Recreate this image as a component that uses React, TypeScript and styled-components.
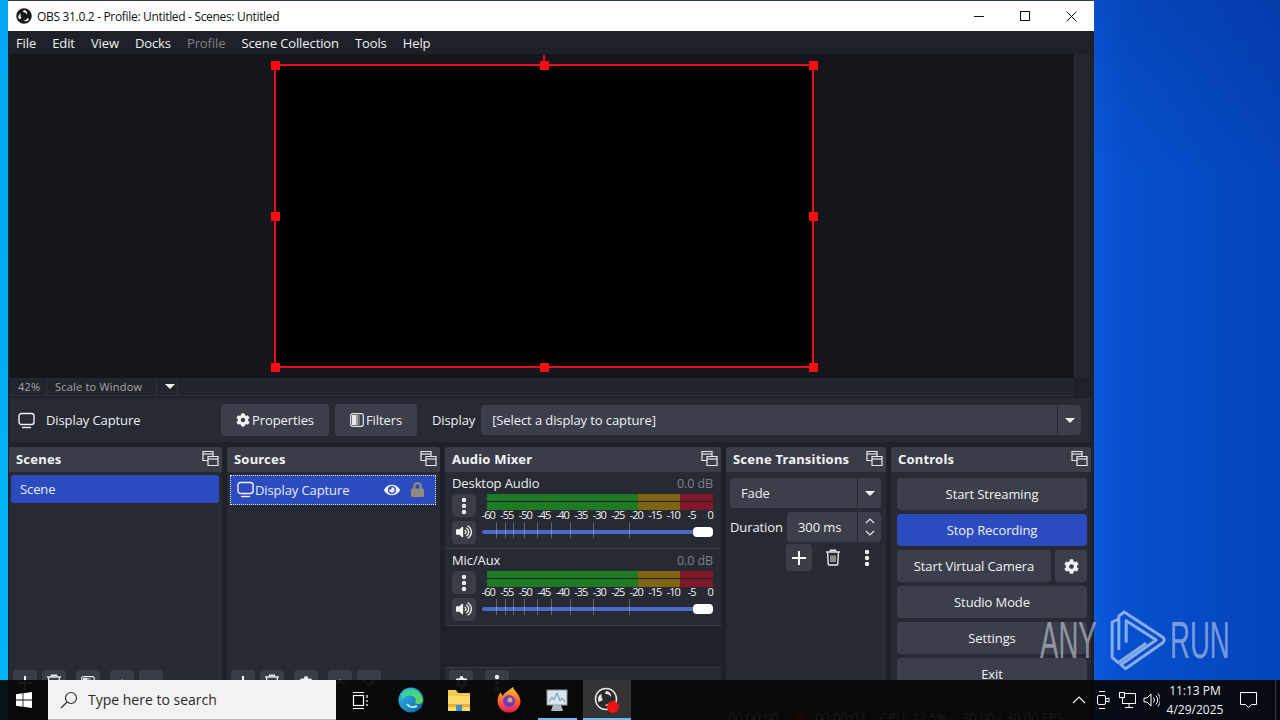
import React from "react";
import styled, { createGlobalStyle } from "styled-components";
import { FaCog, FaEye, FaVolumeUp, FaLock } from "react-icons/fa";

const Global = createGlobalStyle`
  html, body { margin: 0; padding: 0; width: 1280px; height: 720px; overflow: hidden; background: #0a45b8; }
  #root { width: 1280px; height: 720px; overflow: hidden; }
  * { box-sizing: border-box; }
`;

const Desktop = styled.div`
  position: relative; width: 1280px; height: 720px; overflow: hidden;
  display: flex; align-items: flex-start;
  font-family: "Open Sans", "Noto Sans", sans-serif; font-size: 13px; color: #fff; letter-spacing: -0.1px;
  background:
    linear-gradient(180deg, rgba(0,0,50,.12), rgba(0,0,50,0) 180px),
    linear-gradient(90deg, #0a58dc 1095px, #0650cd 1125px, #0444bb 1280px);
`;
const LeftStrip = styled.div`
  width: 8px; height: 720px; flex: none;
  background: linear-gradient(180deg, #04a6f2, #02b4f8);
`;
const Window = styled.div`
  width: 1086px; height: 760px; flex: none; background: #1f2128;
  display: flex; flex-direction: column; border-top: 1px solid #2b3a4e;
`;
const TitleBar = styled.div`
  height: 30px; background: #fff; color: #111; display: flex; align-items: center;
  padding-left: 8px; font-size: 12px; flex: none;
`;
const TitleText = styled.span` margin-left: 5px; letter-spacing: -0.32px; `;
const WindowControls = styled.div` margin-left: auto; display: flex; `;
const WindowButton = styled.div`
  width: 46px; height: 30px; display: flex; align-items: center; justify-content: center;
`;
const MenuBar = styled.div`
  height: 23px; display: flex; align-items: center; padding-left: 8px; flex: none; gap: 16px;
  font-size: 13px; color: #eef0f2;
`;
const MenuItem = styled.span<{ $off?: boolean }>`
  color: ${p => (p.$off ? "#7e8085" : "#eef0f2")};
`;
const PreviewRow = styled.div` height: 324px; display: flex; flex: none; padding-left: 2px; `;
const Preview = styled.div`
  width: 1064px; height: 324px; background: #14161c; display: flex; padding-left: 4px;
  align-items: center; justify-content: center; flex: none;
`;
const Canvas = styled.div`
  position: relative; width: 538px; height: 302px; background: #000;
  box-shadow: 0 0 0 1px #e81018, inset 0 0 0 1px #e81018;
`;
const Handle = styled.i<{ $x: string; $y: string }>`
  position: absolute; width: 9px; height: 9px; background: #ff0a10;
  left: ${p => p.$x}; top: ${p => p.$y}; margin: -4.5px 0 0 -4.5px;
`;
const RotateTick = styled.i`
  position: absolute; left: 50%; top: -10px; width: 2px; height: 9px; margin-left: -1px; background: #e81018;
`;
const VScroll = styled.div`
  width: 16px; height: 324px; background: #23262d; border-left: 1px solid #2c2f37; flex: none;
`;
const ScaleBar = styled.div`
  height: 18px; margin: 0 20px 0 2px; display: flex; align-items: center; background: #23252c;
  font-size: 11px; color: #a4a6aa; border-bottom: 1px solid #2c2f37; flex: none; letter-spacing: 0.2px;
`;
const ScaleCell = styled.span<{ $w: number }>`
  width: ${p => p.$w}px; height: 17px; padding-left: 8px; display: flex; align-items: center;
  border-right: 1px solid #30333b;
`;
const ContextBar = styled.div`
  height: 44px; margin: 2px 0 0 2px; padding: 0 10px 0 8px; background: #272a33; display: flex; align-items: center;
  flex: none; width: 1081px;
`;
const ContextLabel = styled.span` margin-left: 11px; width: 175px; color: #eef0f2; `;
const Button = styled.div`
  height: 32px; background: #3c3f4b; border-radius: 4px; display: flex; align-items: center;
  justify-content: center; color: #f0f1f3; font-size: 13px; gap: 2px;
`;
const ToolButton = styled(Button)<{ $w: number }>` width: ${p => p.$w}px; margin-right: 6px; `;
const DisplayLabel = styled.span` margin: 0 6px 0 9px; color: #eef0f2; `;
const Combo = styled.div`
  flex: 1; height: 30px; background: #3c3f4b; border-radius: 4px; display: flex; align-items: center;
  padding-left: 11px; color: #eef0f2; position: relative;
`;
const ComboArrow = styled.span`
  margin-left: auto; width: 24px; height: 30px; border-left: 1px solid #23252c;
  display: flex; align-items: center; justify-content: center;
`;
const Caret = styled.i`
  width: 0; height: 0; border-left: 5px solid transparent; border-right: 5px solid transparent; border-top: 5px solid #f0f0f0;
`;
const Docks = styled.div`
  margin: 5px 0 0 1px; display: flex; gap: 5px; height: 257px; flex: none;
`;
const Dock = styled.section<{ $w: number }>`
  width: ${p => p.$w}px; background: #272a33; display: flex; flex-direction: column; border-radius: 3px 3px 0 0;
`;
const DockHeader = styled.header`
  height: 25px; background: #3a3d47; display: flex; align-items: center; justify-content: space-between;
  padding: 0 3px 2px 7px; font-weight: 700; font-size: 13px; color: #f4f4f6; flex: none; letter-spacing: 0.2px;
  border-radius: 3px 3px 0 0; font-family: "Noto Sans", sans-serif;
`;
const DockBody = styled.div` flex: 1; display: flex; flex-direction: column; min-height: 0; `;
const SceneList = styled.div` flex: 1; padding: 3px 3px 0 2px; `;
const SourceList = styled.div` flex: 1; padding: 3px 4px 0 3px; `;
const SceneRow = styled.div`
  height: 28px; background: #2b4bbf; border-radius: 3px; padding: 0 0 1px 9px; display: flex; align-items: center; color: #e8ebf5;
`;
const SourceRow = styled.div`
  height: 30px; background: #2b4bbf; border: 1px dotted #dfe6ff; display: flex; align-items: center; color: #e8ebf5;
  padding: 0 10px 1px 6px;
`;
const SourceName = styled.span` margin-left: 1px; flex: 1; `;
const SourceIcons = styled.div` display: flex; align-items: center; gap: 10px; `;
const DockToolbar = styled.div`
  height: 32px; display: flex; align-items: flex-start; padding: 0 4px; gap: 5px; flex: none; margin-bottom: 2px;
`;
const SmallButton = styled.div<{ $w?: number; $sep?: boolean }>`
  width: ${p => p.$w ?? 24}px; height: 25px; background: #3a3d47; border-radius: 4px; flex: none;
  margin-left: ${p => (p.$sep ? "5px" : "0")};
  display: flex; align-items: center; justify-content: center; color: #f0f0f0;
`;
const Channel = styled.div`
  height: 77px; padding: 2px 7px 0; border-bottom: 1px solid #3a3d47; flex: none; display: flex; flex-direction: column;
`;
const ChannelHead = styled.div` display: flex; justify-content: space-between; height: 18px; align-items: center; color: #eef0f2; `;
const Db = styled.span` color: #7f828a; font-size: 12.5px; margin-right: 1px; `;
const MeterRow = styled.div` display: flex; height: 25px; margin-top: 2px; gap: 11px; `;
const MeterCol = styled.div` flex: 1; display: flex; flex-direction: column; position: relative; `;
const MeterBar = styled.div`
  display: grid; grid-template-columns: 151px 42px 33px; height: 16px; margin: 0;
`;
const MeterCell = styled.i<{ $c: string }>`
  display: block; height: 16px; background: linear-gradient(${p => p.$c} 0 7px, #13251a 7px 8px, ${p => p.$c} 8px 100%);
`;
const Scale = styled.div`
  position: absolute; top: 14px; left: -8px; display: grid; grid-template-columns: repeat(13, 18.5px);
  font-size: 11px; line-height: 14px; letter-spacing: -1px; color: #f3f3f3; text-align: center; white-space: nowrap;
`;
const SquareButton = styled.div`
  width: 24px; height: 23px; background: #3a3d47; border-radius: 4px; flex: none;
  display: flex; align-items: center; justify-content: center; color: #f4f4f4;
`;
const SliderRow = styled.div` display: flex; margin-top: 1px; height: 24px; align-items: center; gap: 6px; `;
const SliderTrack = styled.div`
  position: relative; flex: 1; height: 4px; background: #4a69c9; border-radius: 2px; margin-right: 1px;
`;
const SliderTick = styled.i<{ $x: number }>`
  position: absolute; left: ${p => p.$x}px; top: -8px; width: 1px; height: 16px; background: rgba(255,255,255,.28);
`;
const Thumb = styled.i`
  position: absolute; right: 0; top: -3px; width: 20px; height: 10px; background: #fff; border-radius: 4px;
`;
const MixerSpace = styled.div` flex: 1; background: #1f2128; `;
const MixerToolbar = styled(DockToolbar)` border-top: 1px solid #3a3d47; padding: 2px 4px 0; height: 37px; margin: 0; gap: 12px; `;
const TransBody = styled.div` padding: 6px 5px 0 4px; display: flex; flex-direction: column; flex: 1; `;
const TransCombo = styled(Combo)` flex: none; height: 30px; width: 151px; `;
const DurationRow = styled.div` display: flex; align-items: center; margin-top: 4px; height: 30px; color: #eef0f2; `;
const DurationLabel = styled.span` width: 57px; `;
const SpinBox = styled.div`
  width: 94px; height: 30px; background: #3c3f4b; border-radius: 4px; display: flex; align-items: center; padding-left: 11px;
`;
const SpinArrows = styled.div`
  margin-left: auto; width: 24px; height: 30px; border-left: 1px solid #23252c; display: flex; flex-direction: column;
  align-items: center; justify-content: space-around; padding: 3px 0;
`;
const TransTools = styled.div` display: flex; align-items: center; margin: 2px 0 0 55px; height: 27px; `;
const ToolIcon = styled.div<{ $w: number }>` width: ${p => p.$w}px; display: flex; justify-content: center; `;
const PlusButton = styled(SmallButton)` width: 26px; height: 27px; margin-left: 1px; `;
const ControlsBody = styled.div` padding: 6px 4px 0 6px; display: flex; flex-direction: column; gap: 4px; `;
const ControlButton = styled(Button)<{ $active?: boolean; $grow?: boolean }>`
  ${p => (p.$grow ? "flex: 1;" : "")}
  background: ${p => (p.$active ? "#2b4bbf" : "#3c3f4b")};
`;
const ControlPair = styled.div` display: flex; gap: 4px; `;
const GearButton = styled(Button)` width: 32px; flex: none; `;
const StatusBar = styled.div`
  height: 20px; margin-top: 3px; display: flex; align-items: center; font-size: 13px; color: #eef0f2; padding-left: 720px; flex: none;
`;
const StatusItem = styled.span<{ $w: number }>` width: ${p => p.$w}px; flex: none; white-space: nowrap; `;
const RecDot = styled.i`
  width: 12px; height: 12px; border-radius: 50%; background: #e01010; margin: 0 8px 0 -20px; flex: none;
`;
const Taskbar = styled.div`
  position: absolute; left: 0; right: 0; bottom: 0; height: 40px; background: rgba(6,6,6,.93);
  display: flex; align-items: center; color: #fff;
`;
const StartButton = styled.div` width: 48px; height: 40px; display: flex; align-items: center; justify-content: center; `;
const SearchBox = styled.div`
  width: 288px; height: 40px; background: #f2f2f2; border-bottom: 1px solid #b8b8b8; display: flex; align-items: center; padding-left: 12px;
  color: #2a2a2a; font-size: 14px; gap: 10px; letter-spacing: 0;
`;
const TaskSlot = styled.div<{ $active?: boolean; $running?: boolean; $gap?: number }>`
  width: 48px; height: 40px; display: flex; align-items: center; justify-content: center; position: relative;
  margin-left: ${p => p.$gap ?? 0}px;
  background: ${p => (p.$active ? "#333436" : "transparent")};
  ${p => p.$running ? `&::after { content: ''; position: absolute; left: ${p.$active ? 0 : 5}px; right: ${p.$active ? 0 : 4}px; bottom: 0; height: 2px; background: #76b9ed; }` : ""}
`;
const TaskGroup = styled.div` display: flex; `;
const Tray = styled.div` margin-left: auto; display: flex; align-items: center; height: 40px; padding-right: 11px; position: relative; `;
const TraySlot = styled.div` width: 24px; height: 40px; display: flex; align-items: center; justify-content: center; `;
const Clock = styled.div`
  width: 64px; text-align: center; font-size: 12px; line-height: 19px; color: #f2f2f2; white-space: nowrap; letter-spacing: 0;
`;
const ActionCenter = styled.div` width: 42px; display: flex; justify-content: center; `;
const ShowDesktop = styled.i`
  position: absolute; right: 4px; top: 0; width: 1px; height: 40px; background: #3c3c3c;
`;
const Watermark = styled.div`
  position: absolute; left: 1040px; top: 610px; height: 60px; display: flex; align-items: center;
  color: rgba(222,226,240,.55); font-family: "Liberation Sans", sans-serif; font-size: 52px; line-height: 60px; letter-spacing: 0;
`;
const WatermarkText = styled.span` display: inline-block; transform: scaleX(.53); transform-origin: left center; `;
const WatermarkAny = styled(WatermarkText)` margin-right: -38px; `;
const WatermarkRun = styled(WatermarkText)` margin-left: 4px; `;

const FloatIcon = () => (
  <svg width="17" height="17" viewBox="0 0 17 17" fill="none" stroke="#e8e8ea" strokeWidth="1.2">
    <path d="M1 1.5h10v9H1z" fill="#3a3d47" /><path d="M1 4h10" />
    <path d="M6 6.5h10v9H6z" fill="#3a3d47" /><path d="M6 9h10" />
  </svg>
);
const Monitor = ({ size = 17 }: { size?: number }) => (
  <svg width={size} height={size} viewBox="0 0 17 17" fill="none" stroke="#f2f2f4" strokeWidth="1.4">
    <rect x="1" y="1.5" width="15" height="11" rx="2.5" /><path d="M4 15.5h9" />
  </svg>
);
const FilterIcon = () => (
  <svg width="14" height="14" viewBox="0 0 14 14">
    <rect x=".7" y=".7" width="12.6" height="12.6" rx="2" fill="#3c3f4b" stroke="#e6e6e8" strokeWidth="1.2" />
    <rect x="2" y="2" width="4" height="10" fill="#e6e6e8" /><rect x="6" y="2" width="2" height="10" fill="#a0a0a6" /><rect x="8" y="2" width="2" height="10" fill="#70727a" />
  </svg>
);
const Dots = () => (
  <svg width="6" height="18" viewBox="0 0 6 18" fill="#eeeeee"><circle cx="3" cy="3" r="2.2" /><circle cx="3" cy="9" r="2.2" /><circle cx="3" cy="15" r="2.2" /></svg>
);
const Plus = () => (
  <svg width="16" height="16" viewBox="0 0 16 16" stroke="#fff" strokeWidth="2"><path d="M8 1v14M1 8h14" /></svg>
);
const Trash = () => (
  <svg width="16" height="17" viewBox="0 0 16 17" fill="none" stroke="#e8e8ea" strokeWidth="1.4">
    <path d="M1 3h14M5.5 3V1.2h5V3" /><path d="M2.6 3.5l.6 11.5a1 1 0 0 0 1 1h7.6a1 1 0 0 0 1-1l.6-11.5" />
    <path d="M6 6.5v6.5M8 6.5v6.5M10 6.5v6.5" strokeWidth="1" />
  </svg>
);
const Chev = ({ up, big }: { up?: boolean; big?: boolean }) => (
  <svg width={big ? 14 : 10} height={big ? 8 : 6} viewBox="0 0 10 6" fill="none" stroke="#e8e8ea" strokeWidth="1.2"><path d={up ? "M1 5l4-4 4 4" : "M1 1l4 4 4-4"} /></svg>
);
const ObsLogo = ({ size = 16 }: { size?: number }) => (
  <svg width={size} height={size} viewBox="0 0 32 32">
    <circle cx="16" cy="16" r="15.5" fill="#1a1a1c" />
    <path d="M16 4a7 7 0 0 1 6 9 8 8 0 0 0-8-5 6 6 0 0 1 2-4zM26 22a7 7 0 0 1-11 3 8 8 0 0 0 8-5 6 6 0 0 1 3 2zM6 22a7 7 0 0 1 4-11 8 8 0 0 0 1 9 6 6 0 0 1-5 2z" fill="#fff" />
  </svg>
);
const ObsLogoOutline = () => (
  <svg width="26" height="26" viewBox="0 0 26 26">
    <circle cx="12" cy="12" r="10.5" fill="#2a2a2c" stroke="#e6e6e6" strokeWidth="1.5" />
    <path d="M12 4a5 5 0 0 1 5 6 6 6 0 0 0-6-3zM19 16a5 5 0 0 1-8 2 6 6 0 0 0 5-3zM5 15a5 5 0 0 1 3-8 6 6 0 0 0 1 6z" fill="#e6e6e6" />
    <circle cx="19" cy="20" r="6" fill="#f01010" />
  </svg>
);
const Ticks = [14, 23, 31, 42, 55, 69, 88, 111, 147];
const ScaleLabels = ["-60", "-55", "-50", "-45", "-40", "-35", "-30", "-25", "-20", "-15", "-10", "-5", "0"];

const MixerChannel = ({ name }: { name: string }) => (
  <Channel>
    <ChannelHead><span>{name}</span><Db>0.0 dB</Db></ChannelHead>
    <MeterRow>
      <SquareButton><Dots /></SquareButton>
      <MeterCol>
        <MeterBar>
          <MeterCell $c="#1f7a24" /><MeterCell $c="#7f6512" /><MeterCell $c="#80182a" />
        </MeterBar>
        <Scale>{ScaleLabels.map(l => <span key={l}>{l}</span>)}</Scale>
      </MeterCol>
    </MeterRow>
    <SliderRow>
      <SquareButton><FaVolumeUp size={16} /></SquareButton>
      <SliderTrack>
        {Ticks.map(x => <SliderTick key={x} $x={x} />)}
        <Thumb />
      </SliderTrack>
    </SliderRow>
  </Channel>
);

const ListTools = ({ third }: { third: React.ReactNode }) => (
  <DockToolbar>
    <SmallButton><Plus /></SmallButton>
    <SmallButton><Trash /></SmallButton>
    <SmallButton $sep>{third}</SmallButton>
    <SmallButton $sep><Chev up big /></SmallButton>
    <SmallButton><Chev big /></SmallButton>
  </DockToolbar>
);

export default function App() {
  return (
    <Desktop>
      <Global />
      <LeftStrip />
      <Window>
        <TitleBar>
          <ObsLogo />
          <TitleText>OBS 31.0.2 - Profile: Untitled - Scenes: Untitled</TitleText>
          <WindowControls>
            <WindowButton><svg width="10" height="10" stroke="#111"><path d="M0 5.5h10" /></svg></WindowButton>
            <WindowButton><svg width="10" height="10" stroke="#111" fill="none"><rect x=".5" y=".5" width="9" height="9" /></svg></WindowButton>
            <WindowButton><svg width="11" height="11" stroke="#111" fill="none"><path d="M.5.5l10 10M10.5.5l-10 10" /></svg></WindowButton>
          </WindowControls>
        </TitleBar>
        <MenuBar>
          <MenuItem>File</MenuItem><MenuItem>Edit</MenuItem><MenuItem>View</MenuItem><MenuItem>Docks</MenuItem>
          <MenuItem $off>Profile</MenuItem><MenuItem>Scene Collection</MenuItem><MenuItem>Tools</MenuItem><MenuItem>Help</MenuItem>
        </MenuBar>
        <PreviewRow>
          <Preview>
            <Canvas>
              <RotateTick />
              {["0%", "50%", "100%"].flatMap(x => ["0%", "50%", "100%"].filter(y => !(x === "50%" && y === "50%")).map(y => <Handle key={x + y} $x={x} $y={y} />))}
            </Canvas>
          </Preview>
          <VScroll />
        </PreviewRow>
        <ScaleBar>
          <ScaleCell $w={37}>42%</ScaleCell>
          <ScaleCell $w={110}>Scale to Window</ScaleCell>
          <ScaleCell $w={21}><Caret /></ScaleCell>
        </ScaleBar>
        <ContextBar>
          <Monitor />
          <ContextLabel>Display Capture</ContextLabel>
          <ToolButton $w={108}><FaCog size={14} />Properties</ToolButton>
          <ToolButton $w={82}><FilterIcon />Filters</ToolButton>
          <DisplayLabel>Display</DisplayLabel>
          <Combo>[Select a display to capture]<ComboArrow><Caret /></ComboArrow></Combo>
        </ContextBar>
        <Docks>
          <Dock $w={213}>
            <DockHeader>Scenes<FloatIcon /></DockHeader>
            <DockBody>
              <SceneList><SceneRow>Scene</SceneRow></SceneList>
              <ListTools third={<FilterIcon />} />
            </DockBody>
          </Dock>
          <Dock $w={213}>
            <DockHeader>Sources<FloatIcon /></DockHeader>
            <DockBody>
              <SourceList>
                <SourceRow>
                  <Monitor /><SourceName>Display Capture</SourceName>
                  <SourceIcons><FaEye size={16} color="#f2f2f4" /><FaLock size={15} color="#8f8c7c" /></SourceIcons>
                </SourceRow>
              </SourceList>
              <ListTools third={<FaCog size={14} />} />
            </DockBody>
          </Dock>
          <Dock $w={276}>
            <DockHeader>Audio Mixer<FloatIcon /></DockHeader>
            <DockBody>
              <MixerChannel name="Desktop Audio" />
              <MixerChannel name="Mic/Aux" />
              <MixerSpace />
              <MixerToolbar>
                <SmallButton><FaCog size={13} /></SmallButton>
                <SmallButton><Dots /></SmallButton>
              </MixerToolbar>
            </DockBody>
          </Dock>
          <Dock $w={160}>
            <DockHeader>Scene Transitions<FloatIcon /></DockHeader>
            <TransBody>
              <TransCombo>Fade<ComboArrow><Caret /></ComboArrow></TransCombo>
              <DurationRow>
                <DurationLabel>Duration</DurationLabel>
                <SpinBox>300 ms<SpinArrows><Chev up /><Chev /></SpinArrows></SpinBox>
              </DurationRow>
              <TransTools>
                <PlusButton><Plus /></PlusButton>
                <ToolIcon $w={42}><Trash /></ToolIcon>
                <ToolIcon $w={26}><Dots /></ToolIcon>
              </TransTools>
            </TransBody>
          </Dock>
          <Dock $w={200}>
            <DockHeader>Controls<FloatIcon /></DockHeader>
            <ControlsBody>
              <ControlButton>Start Streaming</ControlButton>
              <ControlButton $active>Stop Recording</ControlButton>
              <ControlPair>
                <ControlButton $grow>Start Virtual Camera</ControlButton>
                <GearButton><FaCog size={15} /></GearButton>
              </ControlPair>
              <ControlButton>Studio Mode</ControlButton>
              <ControlButton>Settings</ControlButton>
              <ControlButton>Exit</ControlButton>
            </ControlsBody>
          </Dock>
        </Docks>
        <StatusBar>
          <StatusItem $w={87}>00:00:00</StatusItem>
          <RecDot />
          <StatusItem $w={65}>00:00:07</StatusItem>
          <StatusItem $w={82}>CPU: 12.5%</StatusItem>
          <StatusItem $w={110}>30.00 / 30.00 FPS</StatusItem>
        </StatusBar>
      </Window>

      <Watermark>
        <WatermarkAny>ANY</WatermarkAny>
        <svg width="57" height="60" viewBox="235 30 170 180" fill="none" stroke="rgba(170,195,240,.8)" strokeWidth="9" strokeLinejoin="round">
          <path d="M264 150 V48 L280 36 L396 112 Q404 120 396 128 L284 206 L270 194 L376 120 L286 62 V128" />
          <path d="M262 58 L244 66 V172 L262 188 L346 130" />
        </svg>
        <WatermarkRun>RUN</WatermarkRun>
      </Watermark>

      <Taskbar>
        <StartButton>
          <svg width="16" height="16" viewBox="0 0 16 16" fill="#fff"><path d="M0 2.2l6.6-.9v6.3H0zM7.4 1.2L16 0v7.6H7.4zM0 8.4h6.6v6.3L0 13.8zM7.4 8.4H16V16l-8.6-1.2z" /></svg>
        </StartButton>
        <SearchBox>
          <svg width="18" height="18" viewBox="0 0 18 18" fill="none" stroke="#333" strokeWidth="1.2"><circle cx="11" cy="7" r="5.5" /><path d="M7 11l-6 6" /></svg>
          Type here to search
        </SearchBox>
        <TaskGroup>
          <TaskSlot>
            <svg width="17" height="17" viewBox="0 0 17 17" fill="none" stroke="#fff" strokeWidth="1.2"><path d="M1 .5h11M1 16.5h11" /><rect x="1.5" y="3.5" width="10" height="10" /><path d="M15 3v3M15 8v2M15 12v2" /></svg>
          </TaskSlot>
          <TaskSlot $gap={3}>
            <svg width="26" height="26" viewBox="0 0 26 26">
              <defs>
                <linearGradient id="edgeA" x1="0" y1="0" x2="1" y2="1"><stop offset="0" stopColor="#35c1f1" /><stop offset="1" stopColor="#0c59a4" /></linearGradient>
                <linearGradient id="edgeB" x1="0" y1="0" x2="1" y2="1"><stop offset="0" stopColor="#2ad0a6" /><stop offset="1" stopColor="#6bd94f" /></linearGradient>
              </defs>
              <circle cx="13" cy="13" r="12.5" fill="url(#edgeA)" />
              <path d="M4 7 C8 0 22 0 25 13 C25 17 20 18 17 16 C20 11 14 7 9 9 C6 10 4 12 3 14 Z" fill="url(#edgeB)" />
              <path d="M9 17c2 3 6 4 10 2" stroke="#b6efd8" strokeWidth="2" fill="none" />
            </svg>
          </TaskSlot>
          <TaskSlot>
            <svg width="24" height="21" viewBox="0 0 24 21">
              <path d="M1 0h8l2 3h12v18H1z" fill="#f7c948" /><rect x="1" y="6" width="22" height="15" fill="#fbd96b" />
              <rect x="1" y="14" width="22" height="3" fill="#e8b23a" /><rect x="9" y="15" width="6" height="6" fill="#3d8fd6" />
            </svg>
          </TaskSlot>
          <TaskSlot $gap={2}>
            <svg width="24" height="26" viewBox="0 0 24 26">
              <defs><linearGradient id="ff" x1="0" y1="0" x2="0" y2="1"><stop offset="0" stopColor="#ffc927" /><stop offset=".5" stopColor="#ff6a2d" /><stop offset="1" stopColor="#e31a5e" /></linearGradient></defs>
              <path d="M16 0c1 4 7 7 7.5 14A11.5 11.5 0 0 1 .5 14C.5 10 2 7 4 5c0 2 1 3 2 4 1-4 6-5 10-9z" fill="url(#ff)" />
              <circle cx="12" cy="14" r="6" fill="#6b3bc4" /><circle cx="13" cy="13" r="2.5" fill="#f0a05a" />
            </svg>
          </TaskSlot>
          <TaskSlot $running>
            <svg width="24" height="24" viewBox="0 0 24 24">
              <rect x="2" y="2" width="20" height="15" fill="#dce4ea" stroke="#8a96a2" /><path d="M4 14l3-5 2 3 3-7 3 8 2-3 3 4" fill="none" stroke="#5a94c8" />
              <path d="M8 17h8l2 6H6z" fill="#aeb6bd" />
            </svg>
          </TaskSlot>
          <TaskSlot $active $running $gap={2}>
            <ObsLogoOutline />
          </TaskSlot>
        </TaskGroup>
        <Tray>
          <TraySlot><svg width="14" height="8" fill="none" stroke="#fff" strokeWidth="1.1"><path d="M1 7l6-6 6 6" /></svg></TraySlot>
          <TraySlot>
            <svg width="14" height="20" viewBox="0 0 14 20" fill="none" stroke="#fff"><path d="M3 1.5h6M3 18.5h6" /><rect x="1.5" y="5.5" width="8" height="9" rx="1.5" /><path d="M10 9l3-1v4l-3-1" /></svg>
          </TraySlot>
          <TraySlot>
            <svg width="17" height="16" viewBox="0 0 17 16" fill="none" stroke="#fff"><rect x="3.5" y="1.5" width="13" height="10" /><rect x=".5" y=".5" width="5" height="5" fill="#111" /><path d="M10 12v3M6 15.5h8" /></svg>
          </TraySlot>
          <TraySlot>
            <svg width="17" height="16" viewBox="0 0 17 16" fill="none" stroke="#fff"><path d="M1 6h3l4-4v12l-4-4H1z" /><path d="M10.5 5.5a4 4 0 0 1 0 5M13 3.5a7 7 0 0 1 0 9M15 1.5a10 10 0 0 1 0 13" /></svg>
          </TraySlot>
          <Clock>11:13 PM<br />4/29/2025</Clock>
          <ActionCenter>
            <svg width="17" height="17" viewBox="0 0 17 17" fill="none" stroke="#fff"><path d="M.5.5h16v12h-5l-3 3-3-3h-5z" /></svg>
          </ActionCenter>
          <ShowDesktop />
        </Tray>
      </Taskbar>
    </Desktop>
  );
}
